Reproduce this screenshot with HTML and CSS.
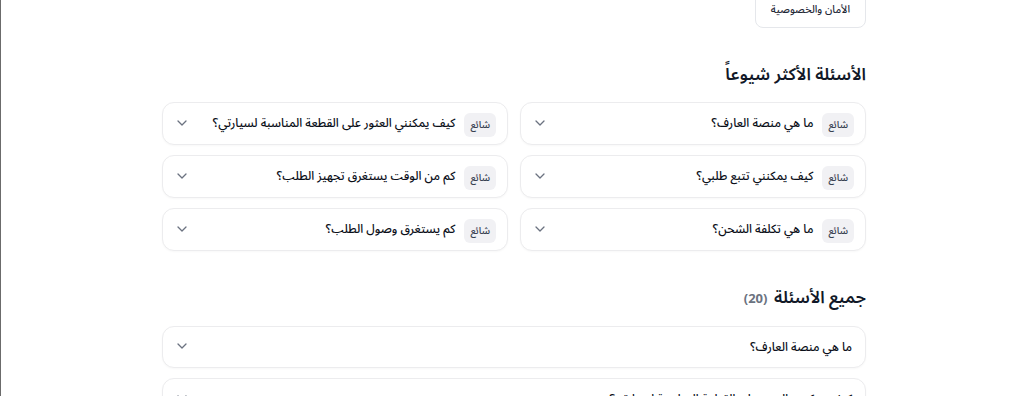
FILE: index.html
```html
<!DOCTYPE html>
<html lang="ar" dir="rtl">
<head>
    <meta charset="UTF-8">
    <meta name="viewport" content="width=device-width, initial-scale=1.0">
    <title>الأسئلة الشائعة</title>
    <link rel="stylesheet" href="styles.css">
</head>
<body>
    <div class="page">
        <div class="cats">
            <button class="cat">الأمان والخصوصية</button>
        </div>

        <h2 class="section-title">الأسئلة الأكثر شيوعاً</h2>
        <div class="popular">
            <div class="faq">
                <span class="tag">شائع</span>
                <span class="q">ما هي منصة العارف؟</span>
                <svg class="chev" width="10" height="6" viewBox="0 0 10 6"><path d="M1 1l4 4 4-4" fill="none" stroke="#6b7280" stroke-width="1.3" stroke-linecap="round" stroke-linejoin="round"/></svg>
            </div>
            <div class="faq">
                <span class="tag">شائع</span>
                <span class="q">كيف يمكنني العثور على القطعة المناسبة لسيارتي؟</span>
                <svg class="chev" width="10" height="6" viewBox="0 0 10 6"><path d="M1 1l4 4 4-4" fill="none" stroke="#6b7280" stroke-width="1.3" stroke-linecap="round" stroke-linejoin="round"/></svg>
            </div>
            <div class="faq">
                <span class="tag">شائع</span>
                <span class="q">كيف يمكنني تتبع طلبي؟</span>
                <svg class="chev" width="10" height="6" viewBox="0 0 10 6"><path d="M1 1l4 4 4-4" fill="none" stroke="#6b7280" stroke-width="1.3" stroke-linecap="round" stroke-linejoin="round"/></svg>
            </div>
            <div class="faq">
                <span class="tag">شائع</span>
                <span class="q">كم من الوقت يستغرق تجهيز الطلب؟</span>
                <svg class="chev" width="10" height="6" viewBox="0 0 10 6"><path d="M1 1l4 4 4-4" fill="none" stroke="#6b7280" stroke-width="1.3" stroke-linecap="round" stroke-linejoin="round"/></svg>
            </div>
            <div class="faq">
                <span class="tag">شائع</span>
                <span class="q">ما هي تكلفة الشحن؟</span>
                <svg class="chev" width="10" height="6" viewBox="0 0 10 6"><path d="M1 1l4 4 4-4" fill="none" stroke="#6b7280" stroke-width="1.3" stroke-linecap="round" stroke-linejoin="round"/></svg>
            </div>
            <div class="faq">
                <span class="tag">شائع</span>
                <span class="q">كم يستغرق وصول الطلب؟</span>
                <svg class="chev" width="10" height="6" viewBox="0 0 10 6"><path d="M1 1l4 4 4-4" fill="none" stroke="#6b7280" stroke-width="1.3" stroke-linecap="round" stroke-linejoin="round"/></svg>
            </div>
        </div>

        <h2 class="section-title all-title">جميع الأسئلة <span class="count">(20)</span></h2>
        <div class="all">
            <div class="faq">
                <span class="q">ما هي منصة العارف؟</span>
                <svg class="chev" width="10" height="6" viewBox="0 0 10 6"><path d="M1 1l4 4 4-4" fill="none" stroke="#6b7280" stroke-width="1.3" stroke-linecap="round" stroke-linejoin="round"/></svg>
            </div>
            <div class="faq">
                <span class="q">كيف يمكنني العثور على القطعة المناسبة لسيارتي؟</span>
                <svg class="chev" width="10" height="6" viewBox="0 0 10 6"><path d="M1 1l4 4 4-4" fill="none" stroke="#6b7280" stroke-width="1.3" stroke-linecap="round" stroke-linejoin="round"/></svg>
            </div>
        </div>
    </div>
</body>
</html>
```

FILE: styles.css
```css
* { margin: 0; padding: 0; box-sizing: border-box; }
html { background: #fff; }
body { font-family: "Noto Sans Arabic", "DejaVu Sans", "Noto Sans", sans-serif; color: #111827; background: #fff; border-left: 1px solid #6b6b6b; padding-left: 3px; height: 100vh; overflow: hidden; }
.page { width: 704px; margin: 0 auto; margin-top: -8px; }
.cats { display: flex; gap: 8px; }
.cat { font-family: inherit; font-size: 10.5px; line-height: 16px; font-weight: 500; color: #1f2937; background: #fff; border: 1px solid #e5e7eb; border-radius: 8px; padding: 9px 15px; white-space: nowrap; }
.section-title { font-size: 17px; font-weight: 600; color: #111827; margin-top: 34px; margin-bottom: 14px; line-height: 26px; }
.all-title { margin-top: 34px; }
.count { font-size: 13px; font-weight: 700; color: #6b7280; margin-right: 2px; }
.popular { display: grid; grid-template-columns: 1fr 1fr; gap: 10px 12px; }
.all { display: flex; flex-direction: column; gap: 10px; }
.faq { display: flex; align-items: center; height: 43px; padding: 0 11px 0 14px; border: 1px solid #ececee; border-radius: 12px; background: #fff; box-shadow: 0 1px 2px rgba(0,0,0,0.03); white-space: nowrap; }
.all .faq { height: 42px; padding-right: 13px; }
.tag { font-size: 10px; font-weight: 500; color: #374151; background: #f1f1f4; border-radius: 6px; padding: 1px 6px 2px; margin-left: 9px; margin-top: 3px; }
.q { font-size: 12px; font-weight: 500; color: #0b0f19; }
.chev { margin-right: auto; margin-bottom: 2px; }
```
